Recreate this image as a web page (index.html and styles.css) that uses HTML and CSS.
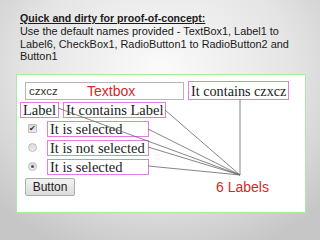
FILE: index.html
```html
<!DOCTYPE html>
<html lang="en">
<head>
    <meta charset="UTF-8">
    <title>Quick and dirty</title>
    <link rel="stylesheet" href="styles.css">
</head>
<body>
    <div class="intro">
        <div class="title">Quick and dirty for proof-of-concept:</div>
        <p>Use the default names provided - TextBox1, Label1 to Label6, CheckBox1, RadioButton1 to RadioButton2 and Button1</p>
    </div>

    <div class="panel">
        <div class="row first">
            <div class="textbox">czxcz</div>
            <span class="lbl czx">It contains czxcz</span>
            <span class="note tb-note">Textbox</span>
        </div>
        <div class="row second">
            <span class="lbl">Label</span>
            <span class="lbl">It contains Label</span>
        </div>
        <div class="row opt">
            <span class="check">&#10004;</span>
            <span class="lbl wide">It is selected</span>
        </div>
        <div class="row opt">
            <span class="radio"></span>
            <span class="lbl wide">It is not selected</span>
        </div>
        <div class="row opt">
            <span class="radio on"></span>
            <span class="lbl wide">It is selected</span>
        </div>
        <div class="row">
            <span class="button">Button</span>
        </div>
        <span class="note labels-note">6 Labels</span>
    </div>

    <svg class="lines" width="320" height="240" viewBox="0 0 320 240">
        <g stroke="#666" stroke-width="0.8">
            <line x1="240" y1="99" x2="240" y2="175"/>
            <line x1="58" y1="108" x2="240" y2="175"/>
            <line x1="165" y1="110" x2="240" y2="175"/>
            <line x1="148" y1="129" x2="240" y2="175"/>
            <line x1="148" y1="147" x2="240" y2="175"/>
            <line x1="148" y1="166" x2="240" y2="175"/>
        </g>
    </svg>
</body>
</html>
```

FILE: styles.css
```css
body {
    margin: 0;
    width: 320px;
    height: 240px;
    overflow: hidden;
    position: relative;
    font-family: 'Liberation Sans', Arial, sans-serif;
    background: radial-gradient(ellipse 70% 80% at 50% 30%, #fbfbfb, #e4e4e4 60%, #c6c6c6);
    color: #1a1a1a;
}
.intro {
    padding: 12px 0 0 20px;
    font-size: 10.9px;
    line-height: 12.4px;
}
.title {
    font-size: 10.6px;
    font-weight: bold;
    text-decoration: underline;
    margin-bottom: 1px;
}
.intro p {
    margin: 0;
    width: 285px;
}
.panel {
    position: relative;
    margin: 11px 0 0 16px;
    width: 290px;
    height: 139px;
    background: white;
    border: 1px solid #a9eaa9;
    box-sizing: border-box;
    padding-top: 7px;
}
.row {
    display: flex;
    align-items: center;
}
.first {
    margin-left: 8px;
    height: 18px;
    margin-bottom: 2px;
}
.second {
    margin-left: 3px;
    gap: 4px;
}
.opt {
    margin-left: 11px;
    margin-top: 3px;
    gap: 10px;
}
.textbox {
    height: 16px;
    border: 1px solid #b5b5b5;
    font-size: 11.5px;
    line-height: 16px;
    padding-left: 3px;
    color: #333;
    width: 154px;
}
.lbl {
    font-family: 'Liberation Serif', 'Times New Roman', serif;
    font-size: 14.5px;
    line-height: 14px;
    color: #222;
    border: 1px solid #e27ee2;
    padding: 0 2px;
    white-space: nowrap;
}
.czx {
    margin-left: 4px;
    padding: 2px 2px 1px 2px;
    font-size: 14.2px;
}
.wide {
    width: 96px;
}
.check, .radio {
    width: 9px;
    height: 9px;
    box-sizing: border-box;
    background: linear-gradient(#d9d9d9, #eeeeee);
    border: 1px solid #bdbdbd;
    flex: none;
}
.check {
    font-size: 8px;
    line-height: 7px;
    color: #333;
    text-align: center;
    border-radius: 1px;
}
.radio {
    border-radius: 50%;
    position: relative;
}
.radio.on::after {
    content: '';
    position: absolute;
    left: 2px;
    top: 2px;
    width: 3px;
    height: 3px;
    border-radius: 50%;
    background: #555;
}
.button {
    margin: 3px 0 0 8px;
    width: 50px;
    height: 18px;
    box-sizing: border-box;
    border: 1px solid #adadad;
    border-radius: 2px;
    background: linear-gradient(#f2f2f2, #dcdcdc);
    font-size: 12px;
    line-height: 16px;
    text-align: center;
    color: #222;
}
.note {
    position: absolute;
    color: #d22a2a;
    font-size: 14px;
}
.tb-note {
    left: 70px;
    top: 8px;
}
.labels-note {
    left: 199px;
    top: 104px;
}
.lines {
    position: absolute;
    left: 0;
    top: 0;
}
```
